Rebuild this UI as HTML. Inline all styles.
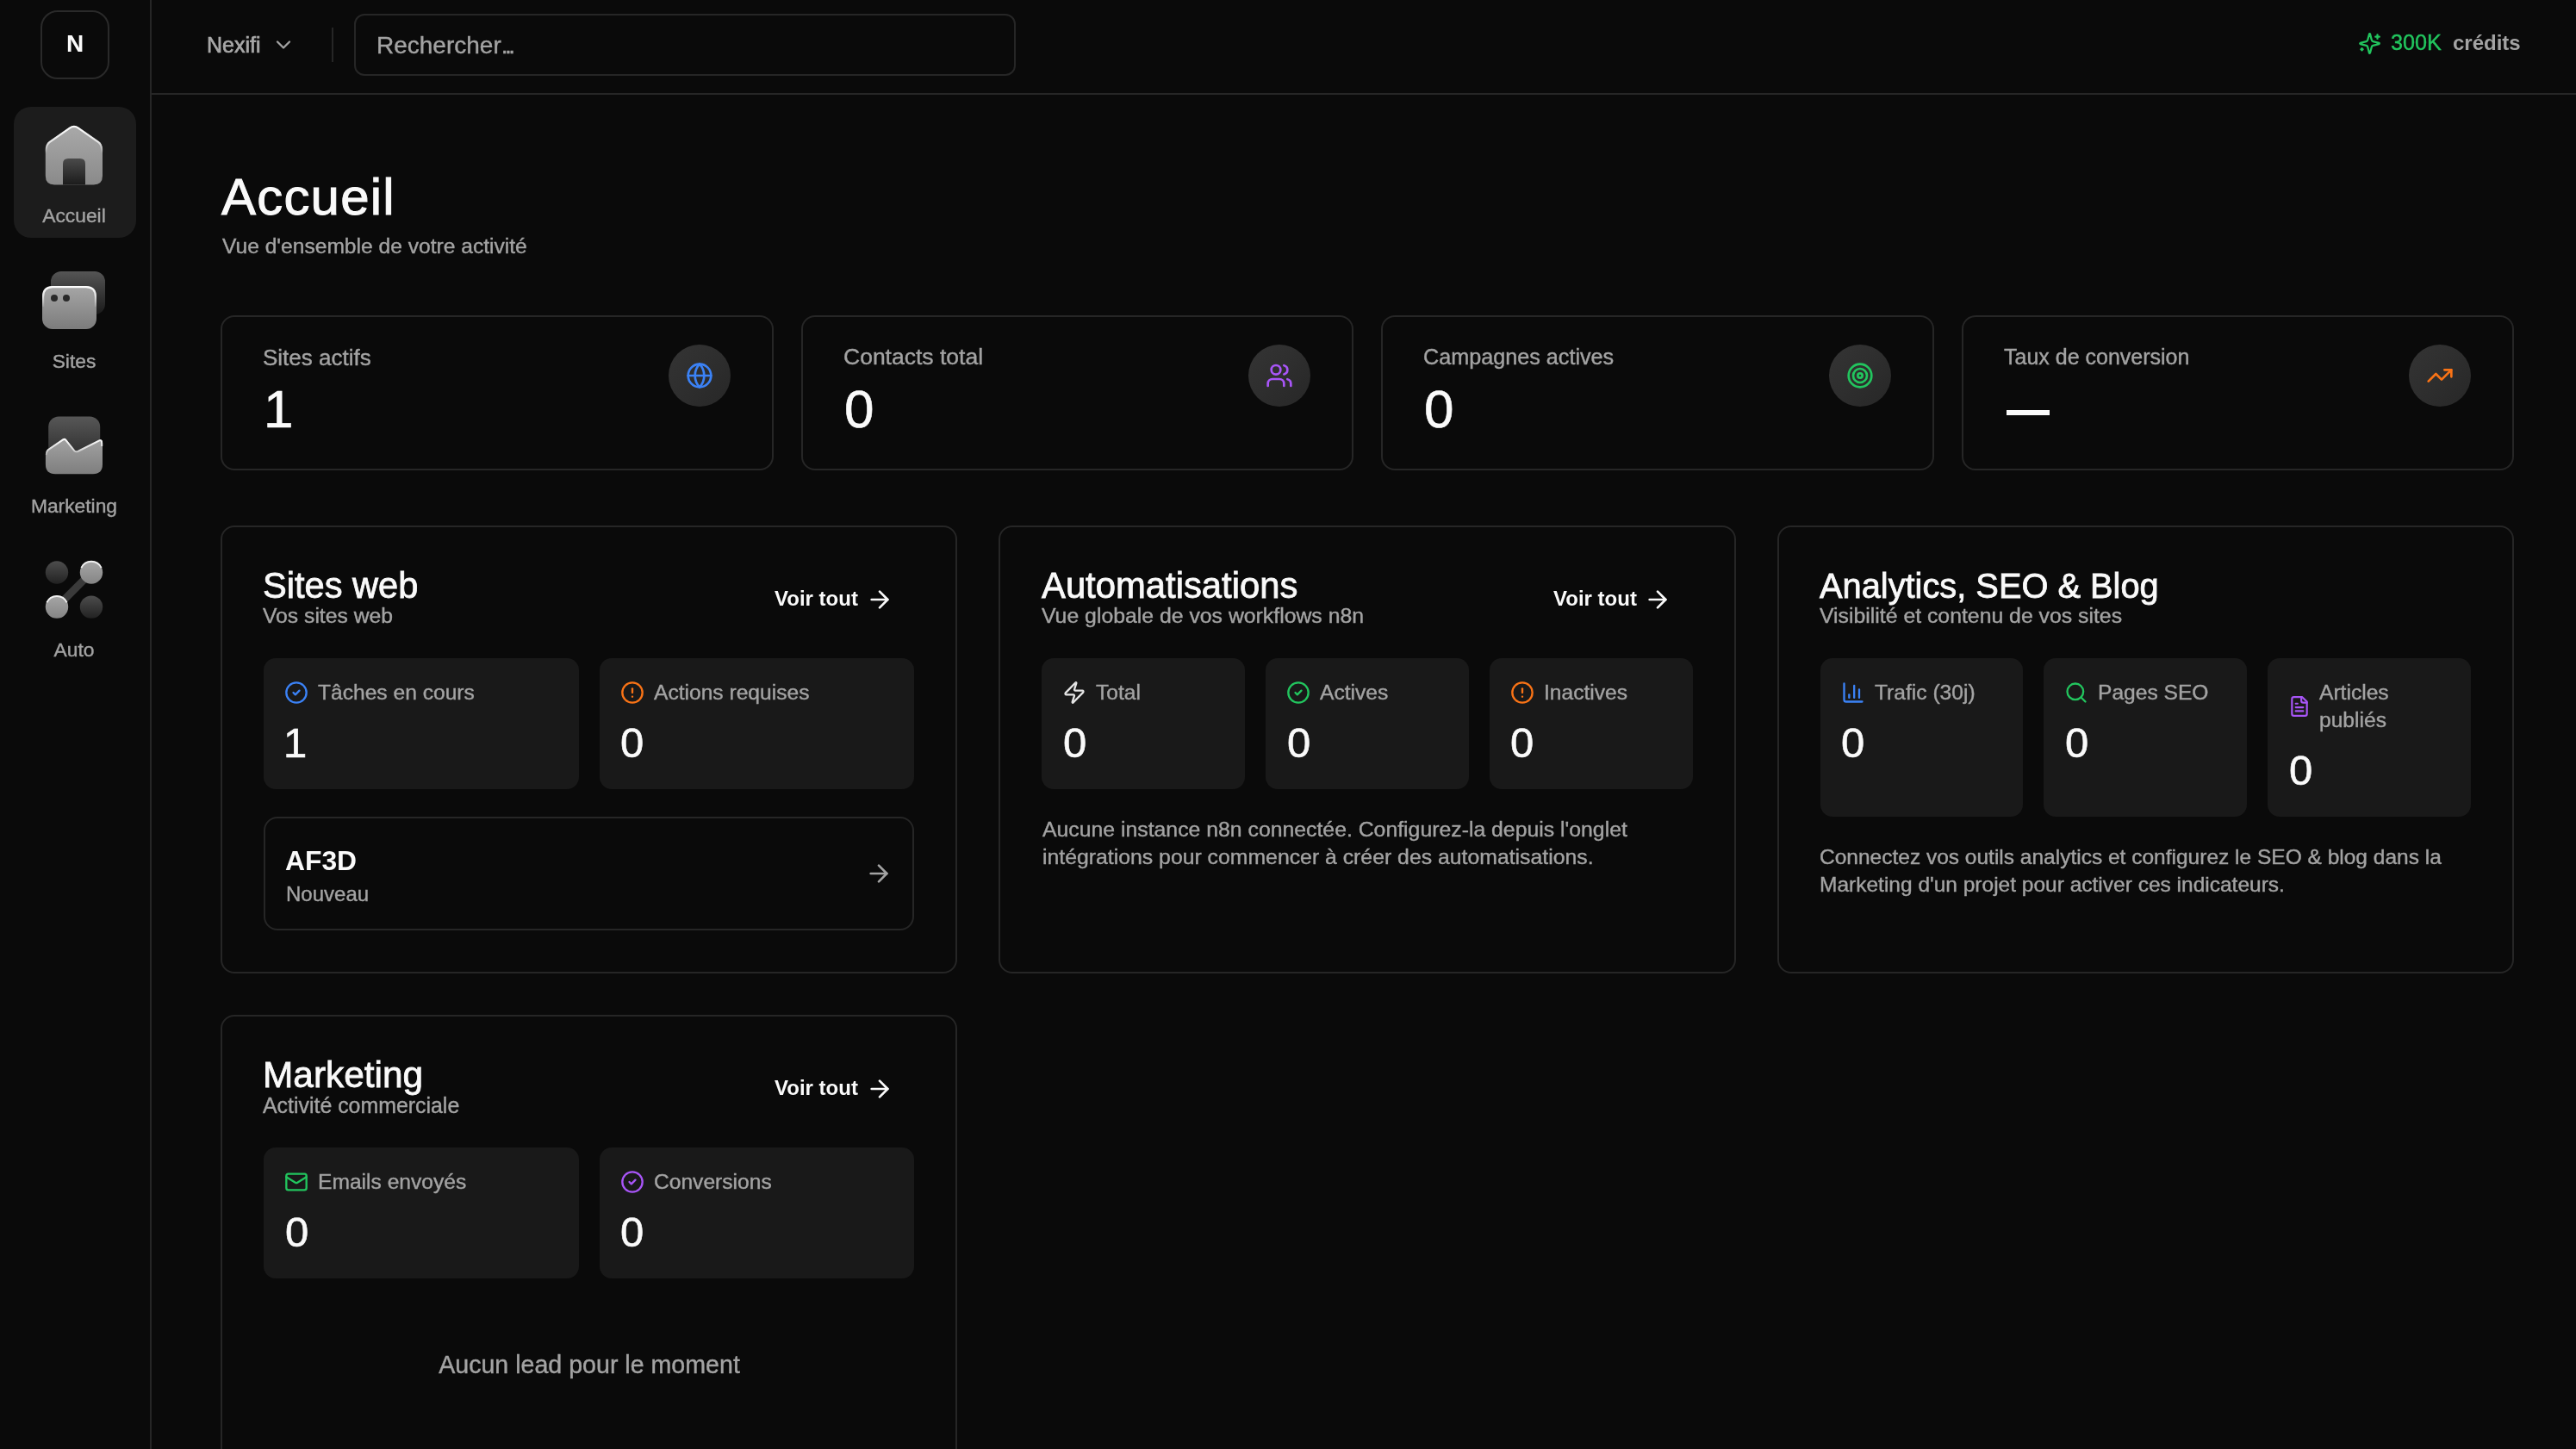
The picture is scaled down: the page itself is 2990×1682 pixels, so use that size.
<!DOCTYPE html>
<html lang="fr">
<head>
<meta charset="utf-8">
<title>Accueil</title>
<style>
*{box-sizing:border-box;margin:0;padding:0}
html,body{width:1495px;height:841px;overflow:hidden;background:#0a0a0a}
body{font-family:"Liberation Sans",sans-serif;color:#fafafa;position:relative}
.t{will-change:transform}
.t{position:absolute;line-height:1;white-space:nowrap}
.b{position:absolute}
svg{position:absolute;overflow:visible}
svg.i{fill:none;stroke:currentColor;stroke-linecap:round;stroke-linejoin:round}

@media (min-width:2200px){html{zoom:2}}
</style>
<script>(function(){var w=window.innerWidth||document.documentElement.clientWidth;if(w&&Math.abs(w-1495)>2){document.documentElement.style.zoom=(w/1495);}})();</script>
</head>
<body>
<div class="b" style="left:0.00px;top:0.00px;width:88.00px;height:841.00px;background:#0a0a0a;border-right:1px solid #262626;"></div>
<div class="b" style="left:23.50px;top:6.00px;width:40.00px;height:40.00px;border:1px solid #2a2a2a;border-radius:10px;"></div>
<div class="t" style="left:28.50px;width:30px;text-align:center;top:18.67px;font-size:14px;color:#fafafa;font-weight:700;">N</div>
<div class="b" style="left:8.00px;top:62.00px;width:71.00px;height:76.00px;background:#1c1c1c;border-radius:10px;"></div>

<svg style="left:23.1px;top:70px;width:40px;height:40px" viewBox="0 0 40 40">
 <defs>
  <linearGradient id="hg" x1="0" y1="0" x2="0" y2="1"><stop offset="0" stop-color="#a9a9a9"/><stop offset="1" stop-color="#8a8a8a"/></linearGradient>
  <linearGradient id="dg" x1="0" y1="0" x2="0" y2="1"><stop offset="0" stop-color="#4a4a4a"/><stop offset="1" stop-color="#1c1c1c"/></linearGradient>
  <linearGradient id="hl1" gradientUnits="userSpaceOnUse" x1="0" y1="2" x2="0" y2="19"><stop offset="0" stop-color="#ffffff"/><stop offset="0.6" stop-color="#e6e6e6"/><stop offset="1" stop-color="#e6e6e6" stop-opacity="0"/></linearGradient>
 </defs>
 <path d="M3.4 17 Q3.4 13.6 5.6 12 L17.3 3.9 Q19.94 2.1 22.6 3.9 L34.3 12 Q36.5 13.6 36.5 17 V32 Q36.5 37.2 31.3 37.2 H8.6 Q3.4 37.2 3.4 32 Z" fill="url(#hg)"/>
 <path d="M3.8 19 V17 Q3.9 13.8 5.9 12.4 L17.5 4.3 Q19.94 2.6 22.4 4.3 L34 12.4 Q36 13.8 36.1 17 V19" fill="none" stroke="url(#hl1)" stroke-width="1.1" stroke-linecap="round"/>
 <path d="M13.5 37.2 V25.1 Q13.5 22 16.6 22 H23.4 Q26.5 22 26.5 25.1 V37.2 Z" fill="url(#dg)"/>
</svg>
<svg style="left:23.0px;top:154px;width:40px;height:40px" viewBox="0 0 40 40">
 <defs>
  <linearGradient id="bg1" x1="0" y1="0" x2="0" y2="1"><stop offset="0" stop-color="#555"/><stop offset="1" stop-color="#1a1a1a"/></linearGradient>
  <linearGradient id="fg1" x1="0" y1="0" x2="0" y2="1"><stop offset="0" stop-color="#a6a6a6"/><stop offset="1" stop-color="#7c7c7c"/></linearGradient>
  <linearGradient id="hl2" gradientUnits="userSpaceOnUse" x1="0" y1="12" x2="0" y2="25"><stop offset="0" stop-color="#ffffff"/><stop offset="0.45" stop-color="#e0e0e0"/><stop offset="1" stop-color="#e0e0e0" stop-opacity="0"/></linearGradient>
 </defs>
 <rect x="6.5" y="3.5" width="31.5" height="25" rx="6" fill="url(#bg1)"/>
 <rect x="1.5" y="12" width="31.5" height="25" rx="6" fill="url(#fg1)"/>
 <path d="M2.05 24 V18.2 Q2.05 12.55 7.6 12.55 H26.9 Q32.45 12.55 32.45 18.2 V24" fill="none" stroke="url(#hl2)" stroke-width="1.1"/>
 <circle cx="8.5" cy="19" r="2" fill="#2a2a2a"/><circle cx="15.5" cy="19" r="2" fill="#2a2a2a"/>
</svg>
<svg style="left:23.0px;top:238px;width:40px;height:40px" viewBox="0 0 40 40">
 <defs>
  <linearGradient id="bg2" x1="0" y1="0" x2="0" y2="1"><stop offset="0" stop-color="#575757"/><stop offset="1" stop-color="#262626"/></linearGradient>
  <linearGradient id="fg2" x1="0" y1="0" x2="0" y2="1"><stop offset="0" stop-color="#a3a3a3"/><stop offset="1" stop-color="#7e7e7e"/></linearGradient>
  <linearGradient id="hl3" gradientUnits="userSpaceOnUse" x1="0" y1="16" x2="0" y2="27"><stop offset="0" stop-color="#ffffff"/><stop offset="0.6" stop-color="#dddddd"/><stop offset="1" stop-color="#dddddd" stop-opacity="0.2"/></linearGradient>
 </defs>
 <rect x="5.1" y="3.7" width="30" height="28" rx="6" fill="url(#bg2)"/>
 <path d="M3.46 26 Q3.46 23.4 5.5 22.3 L13.4 16.8 Q14.5 16.1 15.3 16.9 L20.3 23.3 Q21.07 24.1 22 23.6 L34.6 17.3 Q36.5 16.6 36.5 19 V31.5 Q36.5 37.1 30.9 37.1 H9.1 Q3.46 37.1 3.46 31.5 Z" fill="url(#fg2)"/>
 <path d="M3.85 26 Q3.9 23.6 5.7 22.6 L13.6 17.2 Q14.5 16.6 15.1 17.3 L20.1 23.6 Q21.07 24.5 22.2 24 L34.7 17.7 Q36.1 17.1 36.1 19.5 V21" fill="none" stroke="url(#hl3)" stroke-width="1" stroke-linejoin="round"/>
</svg>
<svg style="left:23.5px;top:322px;width:40px;height:40px" viewBox="0 0 40 40">
 <defs>
  <linearGradient id="dk" x1="0" y1="0" x2="0" y2="1"><stop offset="0" stop-color="#4d4d4d"/><stop offset="1" stop-color="#222"/></linearGradient>
  <linearGradient id="lt" x1="0" y1="0" x2="0" y2="1"><stop offset="0" stop-color="#a6a6a6"/><stop offset="1" stop-color="#858585"/></linearGradient>
 </defs>
 <circle cx="9.5" cy="10.25" r="6.6" fill="url(#dk)"/>
 <circle cx="29.5" cy="30.3" r="6.6" fill="url(#dk)"/>
 <line x1="9.5" y1="30.3" x2="29.5" y2="10.25" stroke="#3a3a3a" stroke-width="4.4"/>
 <circle cx="29.5" cy="10.25" r="6.6" fill="url(#lt)"/>
 <circle cx="9.5" cy="30.3" r="6.6" fill="url(#lt)"/>
 <path d="M23.7 7.6 A6.4 6.4 0 0 1 35.3 7.6" fill="none" stroke="#f0f0f0" stroke-width="1"/>
 <path d="M3.7 27.65 A6.4 6.4 0 0 1 15.3 27.65" fill="none" stroke="#f0f0f0" stroke-width="1"/>
</svg>
<div class="t" style="left:8.00px;width:70px;text-align:center;top:119.73px;font-size:11.4px;color:#a3a3a3;-webkit-text-stroke:0.2px #a3a3a3;">Accueil</div>
<div class="t" style="left:8.00px;width:70px;text-align:center;top:203.83px;font-size:11.4px;color:#a3a3a3;-webkit-text-stroke:0.2px #a3a3a3;">Sites</div>
<div class="t" style="left:8.00px;width:70px;text-align:center;top:287.83px;font-size:11.4px;color:#a3a3a3;-webkit-text-stroke:0.2px #a3a3a3;">Marketing</div>
<div class="t" style="left:8.00px;width:70px;text-align:center;top:371.63px;font-size:11.4px;color:#a3a3a3;-webkit-text-stroke:0.2px #a3a3a3;">Auto</div>
<div class="b" style="left:88.00px;top:54.00px;width:1407.00px;height:1.00px;background:#262626;"></div>
<div class="t" style="left:120.00px;top:19.92px;font-size:12.5px;color:#a8a8a8;-webkit-text-stroke:0.35px #a8a8a8;">Nexifi</div>
<svg class="i" style="left:157.50px;top:18.80px;width:14px;height:14px;color:#a3a3a3" viewBox="0 0 24 24" stroke-width="2"><path d="m6 9 6 6 6-6"/></svg>
<div class="b" style="left:192.30px;top:16.00px;width:1.00px;height:20.00px;background:#262626;"></div>
<div class="b" style="left:205.30px;top:8.00px;width:384.20px;height:36.00px;border:1px solid #262626;border-radius:6px;"></div>
<div class="t" style="left:218.60px;top:19.42px;font-size:14px;color:#a3a3a3;-webkit-text-stroke:0.2px #a3a3a3;">Rechercher<span style='letter-spacing:-1.75px'>...</span></div>
<svg class="i" style="left:1368.40px;top:18.30px;width:13.5px;height:13.5px;color:#22c55e" viewBox="0 0 24 24" stroke-width="2"><path d="M9.937 15.5A2 2 0 0 0 8.5 14.063l-6.135-1.582a.5.5 0 0 1 0-.962L8.5 9.936A2 2 0 0 0 9.937 8.5l1.582-6.135a.5.5 0 0 1 .963 0L14.063 8.5A2 2 0 0 0 15.5 9.937l6.135 1.581a.5.5 0 0 1 0 .964L15.5 14.063a2 2 0 0 0-1.437 1.437l-1.582 6.135a.5.5 0 0 1-.963 0z"/><path d="M20 3v4"/><path d="M22 5h-4"/><path d="M4 17v2"/><path d="M5 18H3"/></svg>
<div class="t" style="left:1387.60px;top:18.54px;font-size:12.6px;color:#22c55e;-webkit-text-stroke:0.2px #22c55e;">300K</div>
<div class="t" style="left:1423.60px;top:19.03px;font-size:12.0px;color:#a3a3a3;font-weight:700;">crédits</div>
<div class="t" style="left:128.60px;top:99.38px;font-size:30.0px;color:#fafafa;-webkit-text-stroke:0.5px #fafafa;letter-spacing:0.6px;">Accueil</div>
<div class="t" style="left:128.90px;top:136.83px;font-size:12.3px;color:#a3a3a3;-webkit-text-stroke:0.2px #a3a3a3;">Vue d'ensemble de votre activité</div>
<div class="b" style="left:128.00px;top:183.00px;width:320.75px;height:90.00px;border:1px solid #262626;border-radius:8px;"></div>
<div class="t" style="left:152.50px;top:200.80px;font-size:13.0px;color:#a3a3a3;-webkit-text-stroke:0.2px #a3a3a3;">Sites actifs</div>
<div class="t" style="left:153.20px;top:222.15px;font-size:31px;color:#fafafa;-webkit-text-stroke:0.3px #fafafa;">1</div>
<div class="b" style="left:387.75px;top:200.00px;width:36.00px;height:36.00px;border-radius:18px;background:linear-gradient(135deg,#343434 0%,#2e2e2e 50%,#272727 100%);"></div>
<svg class="i" style="left:397.75px;top:210.00px;width:16px;height:16px;color:#3b82f6" viewBox="0 0 24 24" stroke-width="2"><circle cx="12" cy="12" r="10"/><path d="M12 2a14.5 14.5 0 0 0 0 20 14.5 14.5 0 0 0 0-20"/><path d="M2 12h20"/></svg>
<div class="b" style="left:464.75px;top:183.00px;width:320.75px;height:90.00px;border:1px solid #262626;border-radius:8px;"></div>
<div class="t" style="left:489.25px;top:200.60px;font-size:13.25px;color:#a3a3a3;-webkit-text-stroke:0.2px #a3a3a3;">Contacts total</div>
<div class="t" style="left:489.95px;top:222.15px;font-size:31px;color:#fafafa;-webkit-text-stroke:0.3px #fafafa;">0</div>
<div class="b" style="left:724.50px;top:200.00px;width:36.00px;height:36.00px;border-radius:18px;background:linear-gradient(135deg,#343434 0%,#2e2e2e 50%,#272727 100%);"></div>
<svg class="i" style="left:734.50px;top:210.00px;width:16px;height:16px;color:#a855f7" viewBox="0 0 24 24" stroke-width="2"><path d="M16 21v-2a4 4 0 0 0-4-4H6a4 4 0 0 0-4 4v2"/><path d="M16 3.128a4 4 0 0 1 0 7.744"/><path d="M22 21v-2a4 4 0 0 0-3-3.87"/><circle cx="9" cy="7" r="4"/></svg>
<div class="b" style="left:801.50px;top:183.00px;width:320.75px;height:90.00px;border:1px solid #262626;border-radius:8px;"></div>
<div class="t" style="left:826.00px;top:201.14px;font-size:12.6px;color:#a3a3a3;-webkit-text-stroke:0.2px #a3a3a3;">Campagnes actives</div>
<div class="t" style="left:826.70px;top:222.15px;font-size:31px;color:#fafafa;-webkit-text-stroke:0.3px #fafafa;">0</div>
<div class="b" style="left:1061.25px;top:200.00px;width:36.00px;height:36.00px;border-radius:18px;background:linear-gradient(135deg,#343434 0%,#2e2e2e 50%,#272727 100%);"></div>
<svg class="i" style="left:1071.25px;top:210.00px;width:16px;height:16px;color:#22c55e" viewBox="0 0 24 24" stroke-width="2"><circle cx="12" cy="12" r="10"/><circle cx="12" cy="12" r="6"/><circle cx="12" cy="12" r="2"/></svg>
<div class="b" style="left:1138.25px;top:183.00px;width:320.75px;height:90.00px;border:1px solid #262626;border-radius:8px;"></div>
<div class="t" style="left:1162.75px;top:201.22px;font-size:12.5px;color:#a3a3a3;-webkit-text-stroke:0.2px #a3a3a3;">Taux de conversion</div>
<div class="b" style="left:1164.45px;top:238.00px;width:25.00px;height:3.00px;background:#fafafa;"></div>
<div class="b" style="left:1398.00px;top:200.00px;width:36.00px;height:36.00px;border-radius:18px;background:linear-gradient(135deg,#343434 0%,#2e2e2e 50%,#272727 100%);"></div>
<svg class="i" style="left:1408.00px;top:210.00px;width:16px;height:16px;color:#f97316" viewBox="0 0 24 24" stroke-width="2"><path d="M16 7h6v6"/><path d="m22 7-8.5 8.5-5-5L2 17"/></svg>
<div class="b" style="left:128.00px;top:305.00px;width:427.67px;height:260.00px;border:1px solid #262626;border-radius:8px;"></div>
<div class="t" style="left:152.60px;top:329.73px;font-size:20.8px;color:#fafafa;-webkit-text-stroke:0.4px #fafafa;">Sites web</div>
<div class="t" style="left:152.60px;top:351.74px;font-size:12.35px;color:#a3a3a3;-webkit-text-stroke:0.2px #a3a3a3;">Vos sites web</div>
<div class="t" style="left:449.67px;top:341.53px;font-size:12.0px;color:#fafafa;font-weight:700;">Voir tout</div>
<svg class="i" style="left:502.27px;top:340.10px;width:16px;height:16px;color:#fafafa" viewBox="0 0 24 24" stroke-width="2"><path d="M5 12h14"/><path d="m12 5 7 7-7 7"/></svg>
<div class="b" style="left:153.00px;top:382.00px;width:182.83px;height:76.00px;background:#191919;border-radius:7px;"></div>
<svg class="i" style="left:165.00px;top:395.00px;width:14px;height:14px;color:#3b82f6" viewBox="0 0 24 24" stroke-width="2"><circle cx="12" cy="12" r="10"/><path d="m9 12 2 2 4-4"/></svg>
<div class="t" style="left:184.50px;top:395.98px;font-size:12.3px;color:#a3a3a3;-webkit-text-stroke:0.2px #a3a3a3;">Tâches en cours</div>
<div class="t" style="left:164.30px;top:419.15px;font-size:24.5px;color:#fafafa;-webkit-text-stroke:0.3px #fafafa;">1</div>
<div class="b" style="left:347.83px;top:382.00px;width:182.83px;height:76.00px;background:#191919;border-radius:7px;"></div>
<svg class="i" style="left:359.83px;top:395.00px;width:14px;height:14px;color:#f97316" viewBox="0 0 24 24" stroke-width="2"><circle cx="12" cy="12" r="10"/><line x1="12" x2="12" y1="8" y2="12"/><line x1="12" x2="12.01" y1="16" y2="16"/></svg>
<div class="t" style="left:379.33px;top:395.98px;font-size:12.3px;color:#a3a3a3;-webkit-text-stroke:0.2px #a3a3a3;">Actions requises</div>
<div class="t" style="left:360.13px;top:419.15px;font-size:24.5px;color:#fafafa;-webkit-text-stroke:0.3px #fafafa;">0</div>
<div class="b" style="left:153.00px;top:474.00px;width:377.67px;height:66.00px;border:1px solid #262626;border-radius:8px;"></div>
<div class="t" style="left:165.50px;top:491.90px;font-size:15.9px;color:#fafafa;font-weight:700;">AF3D</div>
<div class="t" style="left:165.80px;top:513.03px;font-size:12.0px;color:#a3a3a3;-webkit-text-stroke:0.2px #a3a3a3;">Nouveau</div>
<svg class="i" style="left:502.12px;top:498.90px;width:16px;height:16px;color:#a3a3a3" viewBox="0 0 24 24" stroke-width="2"><path d="M5 12h14"/><path d="m12 5 7 7-7 7"/></svg>
<div class="b" style="left:579.67px;top:305.00px;width:427.67px;height:260.00px;border:1px solid #262626;border-radius:8px;"></div>
<div class="t" style="left:604.27px;top:329.64px;font-size:20.9px;color:#fafafa;-webkit-text-stroke:0.4px #fafafa;">Automatisations</div>
<div class="t" style="left:604.27px;top:351.70px;font-size:12.4px;color:#a3a3a3;-webkit-text-stroke:0.2px #a3a3a3;">Vue globale de vos workflows n8n</div>
<div class="t" style="left:901.33px;top:341.53px;font-size:12.0px;color:#fafafa;font-weight:700;">Voir tout</div>
<svg class="i" style="left:953.93px;top:340.10px;width:16px;height:16px;color:#fafafa" viewBox="0 0 24 24" stroke-width="2"><path d="M5 12h14"/><path d="m12 5 7 7-7 7"/></svg>
<div class="b" style="left:604.67px;top:382.00px;width:117.89px;height:76.00px;background:#191919;border-radius:7px;"></div>
<svg class="i" style="left:616.67px;top:395.00px;width:14px;height:14px;color:#e5e5e5" viewBox="0 0 24 24" stroke-width="2"><path d="M4 14a1 1 0 0 1-.78-1.63l9.9-10.2a.5.5 0 0 1 .86.46l-1.92 6.02A1 1 0 0 0 13 10h7a1 1 0 0 1 .78 1.63l-9.9 10.2a.5.5 0 0 1-.86-.46l1.92-6.02A1 1 0 0 0 11 14z"/></svg>
<div class="t" style="left:636.17px;top:395.98px;font-size:12.3px;color:#a3a3a3;-webkit-text-stroke:0.2px #a3a3a3;">Total</div>
<div class="t" style="left:616.97px;top:419.15px;font-size:24.5px;color:#fafafa;-webkit-text-stroke:0.3px #fafafa;">0</div>
<div class="b" style="left:734.56px;top:382.00px;width:117.89px;height:76.00px;background:#191919;border-radius:7px;"></div>
<svg class="i" style="left:746.56px;top:395.00px;width:14px;height:14px;color:#22c55e" viewBox="0 0 24 24" stroke-width="2"><circle cx="12" cy="12" r="10"/><path d="m9 12 2 2 4-4"/></svg>
<div class="t" style="left:766.06px;top:395.98px;font-size:12.3px;color:#a3a3a3;-webkit-text-stroke:0.2px #a3a3a3;">Actives</div>
<div class="t" style="left:746.86px;top:419.15px;font-size:24.5px;color:#fafafa;-webkit-text-stroke:0.3px #fafafa;">0</div>
<div class="b" style="left:864.44px;top:382.00px;width:117.89px;height:76.00px;background:#191919;border-radius:7px;"></div>
<svg class="i" style="left:876.44px;top:395.00px;width:14px;height:14px;color:#f97316" viewBox="0 0 24 24" stroke-width="2"><circle cx="12" cy="12" r="10"/><line x1="12" x2="12" y1="8" y2="12"/><line x1="12" x2="12.01" y1="16" y2="16"/></svg>
<div class="t" style="left:895.94px;top:395.98px;font-size:12.3px;color:#a3a3a3;-webkit-text-stroke:0.2px #a3a3a3;">Inactives</div>
<div class="t" style="left:876.74px;top:419.15px;font-size:24.5px;color:#fafafa;-webkit-text-stroke:0.3px #fafafa;">0</div>
<div class="t" style="left:605.07px;top:475.70px;font-size:12.4px;color:#a3a3a3;-webkit-text-stroke:0.2px #a3a3a3;">Aucune instance n8n connectée. Configurez-la depuis l'onglet</div>
<div class="t" style="left:605.07px;top:491.55px;font-size:12.4px;color:#a3a3a3;-webkit-text-stroke:0.2px #a3a3a3;">intégrations pour commencer à créer des automatisations.</div>
<div class="b" style="left:1031.33px;top:305.00px;width:427.67px;height:260.00px;border:1px solid #262626;border-radius:8px;"></div>
<div class="t" style="left:1055.93px;top:330.47px;font-size:19.9px;color:#fafafa;-webkit-text-stroke:0.4px #fafafa;">Analytics, SEO &amp; Blog</div>
<div class="t" style="left:1055.93px;top:351.70px;font-size:12.4px;color:#a3a3a3;-webkit-text-stroke:0.2px #a3a3a3;">Visibilité et contenu de vos sites</div>
<div class="b" style="left:1056.33px;top:382.00px;width:117.89px;height:92.00px;background:#191919;border-radius:7px;"></div>
<svg class="i" style="left:1068.33px;top:395.00px;width:14px;height:14px;color:#3b82f6" viewBox="0 0 24 24" stroke-width="2"><path d="M3 3v16a2 2 0 0 0 2 2h16"/><path d="M18 17V9"/><path d="M13 17V5"/><path d="M8 17v-3"/></svg>
<div class="t" style="left:1087.83px;top:395.98px;font-size:12.3px;color:#a3a3a3;-webkit-text-stroke:0.2px #a3a3a3;">Trafic (30j)</div>
<div class="t" style="left:1068.63px;top:419.15px;font-size:24.5px;color:#fafafa;-webkit-text-stroke:0.3px #fafafa;">0</div>
<div class="b" style="left:1186.22px;top:382.00px;width:117.89px;height:92.00px;background:#191919;border-radius:7px;"></div>
<svg class="i" style="left:1198.22px;top:395.00px;width:14px;height:14px;color:#22c55e" viewBox="0 0 24 24" stroke-width="2"><circle cx="11" cy="11" r="8"/><path d="m21 21-4.3-4.3"/></svg>
<div class="t" style="left:1217.72px;top:395.98px;font-size:12.3px;color:#a3a3a3;-webkit-text-stroke:0.2px #a3a3a3;">Pages SEO</div>
<div class="t" style="left:1198.52px;top:419.15px;font-size:24.5px;color:#fafafa;-webkit-text-stroke:0.3px #fafafa;">0</div>
<div class="b" style="left:1316.11px;top:382.00px;width:117.89px;height:92.00px;background:#191919;border-radius:7px;"></div>
<svg class="i" style="left:1327.76px;top:403.50px;width:13px;height:13px;color:#a855f7" viewBox="0 0 24 24" stroke-width="2"><path d="M15 2H6a2 2 0 0 0-2 2v16a2 2 0 0 0 2 2h12a2 2 0 0 0 2-2V7Z"/><path d="M14 2v4a2 2 0 0 0 2 2h4"/><path d="M10 9H8"/><path d="M16 13H8"/><path d="M16 17H8"/></svg>
<div class="t" style="left:1346.11px;top:395.98px;font-size:12.3px;color:#a3a3a3;-webkit-text-stroke:0.2px #a3a3a3;">Articles</div>
<div class="t" style="left:1346.11px;top:411.78px;font-size:12.3px;color:#a3a3a3;-webkit-text-stroke:0.2px #a3a3a3;">publiés</div>
<div class="t" style="left:1328.41px;top:435.15px;font-size:24.5px;color:#fafafa;-webkit-text-stroke:0.3px #fafafa;">0</div>
<div class="t" style="left:1055.93px;top:491.63px;font-size:12.25px;color:#a3a3a3;-webkit-text-stroke:0.2px #a3a3a3;">Connectez vos outils analytics et configurez le SEO &amp; blog dans la</div>
<div class="t" style="left:1055.93px;top:507.53px;font-size:12.25px;color:#a3a3a3;-webkit-text-stroke:0.2px #a3a3a3;">Marketing d'un projet pour activer ces indicateurs.</div>
<div class="b" style="left:128.00px;top:589.00px;width:427.67px;height:300.00px;border:1px solid #262626;border-radius:8px;"></div>
<div class="t" style="left:152.60px;top:613.39px;font-size:21.2px;color:#fafafa;-webkit-text-stroke:0.4px #fafafa;">Marketing</div>
<div class="t" style="left:152.60px;top:635.66px;font-size:12.45px;color:#a3a3a3;-webkit-text-stroke:0.2px #a3a3a3;">Activité commerciale</div>
<div class="t" style="left:449.67px;top:625.53px;font-size:12.0px;color:#fafafa;font-weight:700;">Voir tout</div>
<svg class="i" style="left:502.27px;top:624.10px;width:16px;height:16px;color:#fafafa" viewBox="0 0 24 24" stroke-width="2"><path d="M5 12h14"/><path d="m12 5 7 7-7 7"/></svg>
<div class="b" style="left:153.00px;top:666.00px;width:182.83px;height:76.00px;background:#191919;border-radius:7px;"></div>
<svg class="i" style="left:165.00px;top:679.00px;width:14px;height:14px;color:#22c55e" viewBox="0 0 24 24" stroke-width="2"><rect width="20" height="16" x="2" y="4" rx="2"/><path d="m22 7-8.97 5.7a1.94 1.94 0 0 1-2.06 0L2 7"/></svg>
<div class="t" style="left:184.50px;top:679.98px;font-size:12.3px;color:#a3a3a3;-webkit-text-stroke:0.2px #a3a3a3;">Emails envoyés</div>
<div class="t" style="left:165.30px;top:703.15px;font-size:24.5px;color:#fafafa;-webkit-text-stroke:0.3px #fafafa;">0</div>
<div class="b" style="left:347.83px;top:666.00px;width:182.83px;height:76.00px;background:#191919;border-radius:7px;"></div>
<svg class="i" style="left:359.83px;top:679.00px;width:14px;height:14px;color:#a855f7" viewBox="0 0 24 24" stroke-width="2"><circle cx="12" cy="12" r="10"/><path d="m9 12 2 2 4-4"/></svg>
<div class="t" style="left:379.33px;top:679.98px;font-size:12.3px;color:#a3a3a3;-webkit-text-stroke:0.2px #a3a3a3;">Conversions</div>
<div class="t" style="left:360.13px;top:703.15px;font-size:24.5px;color:#fafafa;-webkit-text-stroke:0.3px #fafafa;">0</div>
<div class="t" style="left:191.83px;width:300px;text-align:center;top:785.12px;font-size:14.3px;color:#a3a3a3;-webkit-text-stroke:0.2px #a3a3a3;">Aucun lead pour le moment</div>

</body>
</html>
